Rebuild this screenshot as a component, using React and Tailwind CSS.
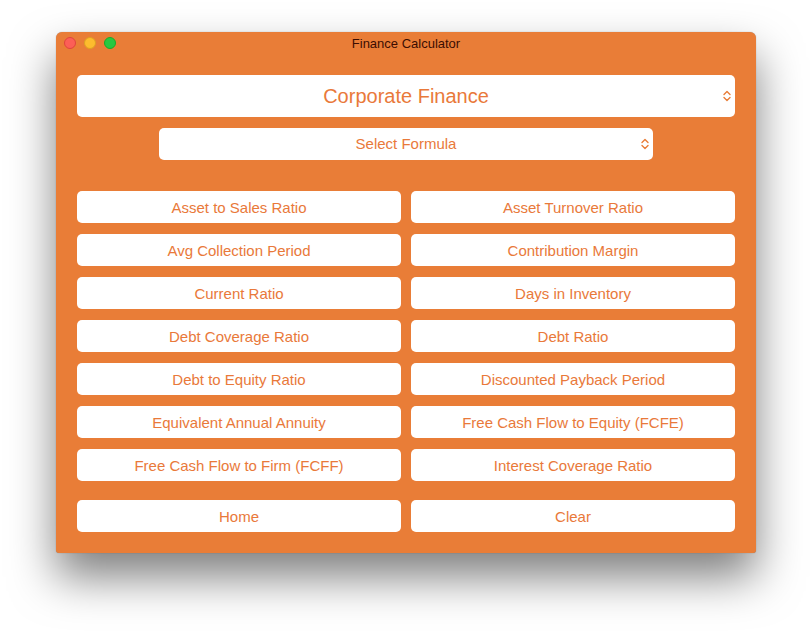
const formulas = [
  "Asset to Sales Ratio",
  "Asset Turnover Ratio",
  "Avg Collection Period",
  "Contribution Margin",
  "Current Ratio",
  "Days in Inventory",
  "Debt Coverage Ratio",
  "Debt Ratio",
  "Debt to Equity Ratio",
  "Discounted Payback Period",
  "Equivalent Annual Annuity",
  "Free Cash Flow to Equity (FCFE)",
  "Free Cash Flow to Firm (FCFF)",
  "Interest Coverage Ratio",
];

const Chevrons = ({ className }) => (
  <svg className={className} width="8" height="12" viewBox="0 0 8 12" fill="none">
    <path d="M1 4.5 L4 1.5 L7 4.5 M1 7.5 L4 10.5 L7 7.5" stroke="#e97d37" strokeWidth="1.4" strokeLinecap="round" strokeLinejoin="round" />
  </svg>
);

const Btn = ({ label }) => (
  <button className="h-8 pt-[2px] bg-white rounded-[5px] text-[15px] text-[#e9793a] flex items-center justify-center">
    {label}
  </button>
);

export default function App() {
  return (
    <div className="w-[812px] h-[634px] bg-white pt-8 pl-14 font-['Liberation_Sans',Arial,sans-serif]">
      <div className="w-[700px] h-[521px] bg-[#e97d37] rounded-t-[6px] rounded-b-[3px] shadow-[0_24px_45px_rgba(0,0,0,0.5),0_0_1px_rgba(0,0,0,0.4)] flex flex-col">
        <div className="relative h-[23px] flex items-center justify-center">
          <div className="absolute left-2 top-[5px] flex gap-2">
            <span className="w-3 h-3 rounded-full bg-[#fc5f57] border border-[#e0443e]"></span>
            <span className="w-3 h-3 rounded-full bg-[#fdbc2e] border border-[#dea123]"></span>
            <span className="w-3 h-3 rounded-full bg-[#28c840] border border-[#1aab29]"></span>
          </div>
          <span className="text-[13px] text-[#3b0d02]">Finance Calculator</span>
        </div>

        <div className="px-[21px] pt-5 flex flex-col">
          <div className="relative h-[42px] bg-white rounded-[5px] flex items-center justify-center">
            <span className="text-[20px] text-[#e9793a]">Corporate Finance</span>
            <Chevrons className="absolute right-[4px] top-[15px]" />
          </div>

          <div className="mx-[82px] mt-[11px] relative h-8 bg-white rounded-[5px] flex items-center justify-center">
            <span className="text-[15px] text-[#e9793a]">Select Formula</span>
            <Chevrons className="absolute right-[4px] top-[10px]" />
          </div>

          <div className="mt-[31px] grid grid-cols-2 gap-x-[10px] gap-y-[11px]">
            {formulas.map((f) => (
              <Btn key={f} label={f} />
            ))}
          </div>

          <div className="mt-[19px] grid grid-cols-2 gap-x-[10px]">
            <Btn label="Home" />
            <Btn label="Clear" />
          </div>
        </div>
      </div>
    </div>
  );
}
